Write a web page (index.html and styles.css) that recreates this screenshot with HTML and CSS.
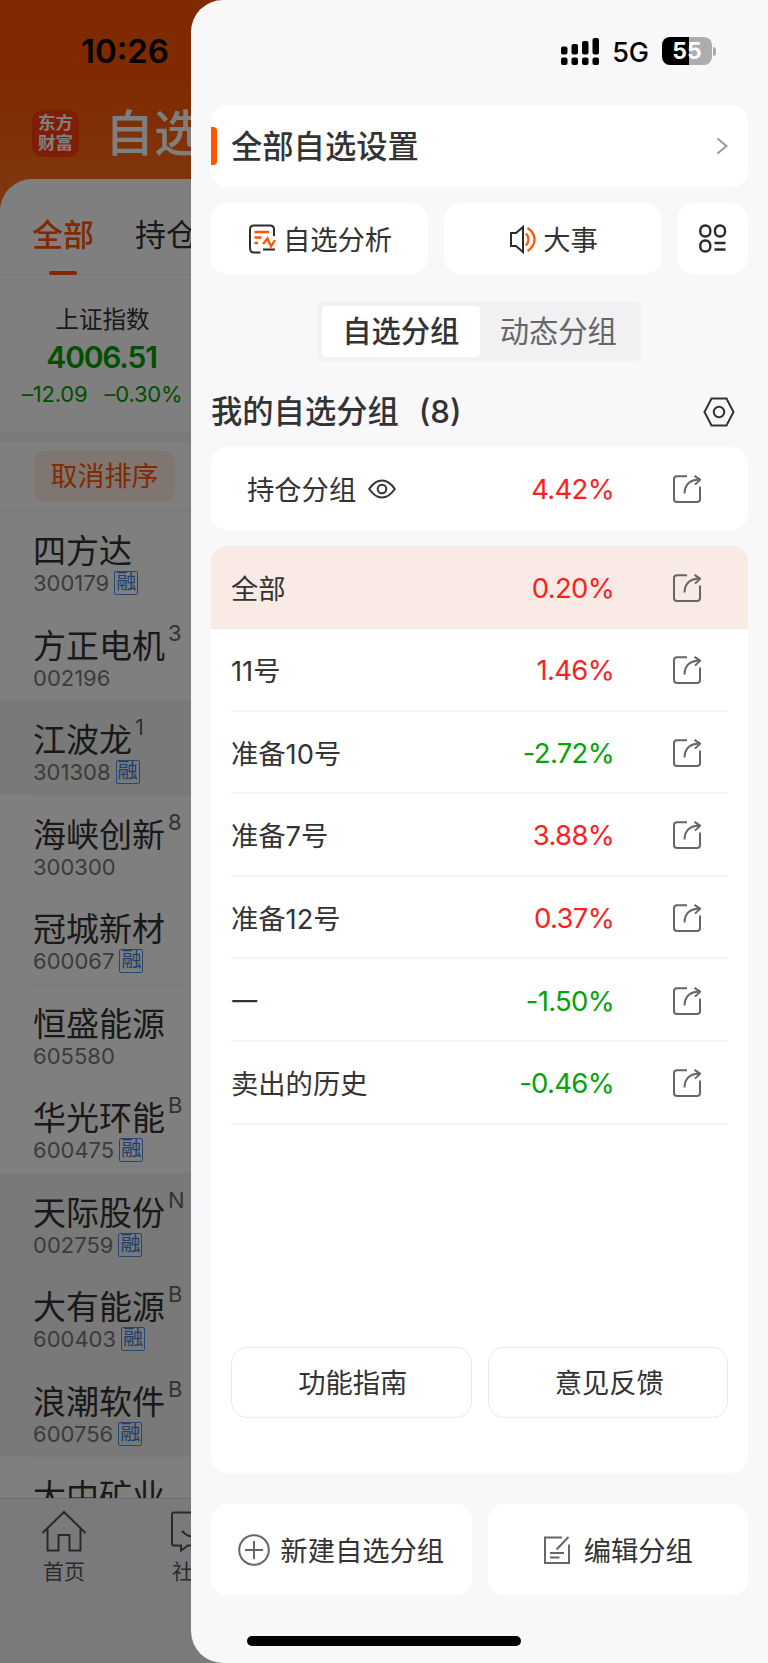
FILE: index.html
```html
<!DOCTYPE html>
<html lang="zh-CN">

<head>
  <meta charset="UTF-8">
  <meta name="viewport" content="width=device-width, initial-scale=1.0">
  <title>自选分组</title>
  <link rel="stylesheet" href="styles.css">
</head>

<body>

  <svg class="sprite">
    <symbol id="share" viewBox="0 0 28 28">
      <path d="M14 1.2H4Q1 1.2 1 4.2V24Q1 27 4 27H24Q27 27 27 24V11.5" />
      <path d="M11.5 18.5C11.7 9.5 17 4.8 27 4.6M21.5 .8L27.2 4.6L22 9.6" />
    </symbol>
  </svg>

  <!-- 底层自选页面 -->
  <div class="page">
    <div class="header">
      <div class="logo">东方<br>财富</div>
      <div class="title">自选</div>
    </div>
    <div class="sheet">
      <div class="tabs">
        <span class="tab active">全部</span>
        <span class="tab">持仓</span>
      </div>
      <div class="index">
        <div class="index-name">上证指数</div>
        <div class="index-value">4006.51</div>
        <div class="index-change"><span>–12.09</span><span>–0.30%</span></div>
      </div>
      <div class="sort"><span class="sort-btn">取消排序</span></div>
      <div class="stocks">
        <div class="stock"><div class="name">四方达</div><div class="code">300179<i>融</i></div></div>
        <div class="stock"><div class="name">方正电机<sup>3</sup></div><div class="code">002196</div></div>
        <div class="stock gray"><div class="name">江波龙<sup>1</sup></div><div class="code">301308<i>融</i></div></div>
        <div class="stock"><div class="name">海峡创新<sup>8</sup></div><div class="code">300300</div></div>
        <div class="stock"><div class="name">冠城新材</div><div class="code">600067<i>融</i></div></div>
        <div class="stock"><div class="name">恒盛能源</div><div class="code">605580</div></div>
        <div class="stock"><div class="name">华光环能<sup>B</sup></div><div class="code">600475<i>融</i></div></div>
        <div class="stock gray"><div class="name">天际股份<sup>N</sup></div><div class="code">002759<i>融</i></div></div>
        <div class="stock gray"><div class="name">大有能源<sup>B</sup></div><div class="code">600403<i>融</i></div></div>
        <div class="stock gray"><div class="name">浪潮软件<sup>B</sup></div><div class="code">600756<i>融</i></div></div>
        <div class="stock"><div class="name">大中矿业</div></div>
      </div>
    </div>
    <div class="tabbar">
      <div class="tabbar-item">
        <svg width="46" height="42" viewBox="0 0 46 42">
          <path d="M1.5 23L23 2L44.500 23M6.500 18.500V40.500H17.500V25H28.500V40.500H39.500V18.500" />
        </svg>
        <span>首页</span>
      </div>
      <div class="tabbar-item">
        <svg width="46" height="42" viewBox="0 0 46 42">
          <path d="M4 2.500H42Q44 2.500 44 4.500V35.500H18L11 40.500V35.500H4Q2 35.500 2 33.500V4.500Q2 2.500 4 2.500ZM12 21Q22 32 33 21" />
        </svg>
        <span>社区</span>
      </div>
    </div>
  </div>

  <div class="mask"></div>
  <div class="time">10:26</div>

  <!-- 右侧抽屉 -->
  <div class="drawer">
    <div class="status">
      <svg width="40" height="30" viewBox="0 0 40 30">
        <rect x="1" y="9.500" width="6.500" height="8" rx="2" />
        <rect x="11.500" y="7" width="6.500" height="10.500" rx="2" />
        <rect x="22" y="4" width="6.500" height="13.500" rx="2" />
        <rect x="32.500" y="1" width="6.500" height="16.500" rx="2" />
        <rect x="1" y="20.500" width="6.500" height="7.500" rx="2" />
        <rect x="11.500" y="20.500" width="6.500" height="7.500" rx="2" />
        <rect x="22" y="20.500" width="6.500" height="7.500" rx="2" />
        <rect x="32.500" y="20.500" width="6.500" height="7.500" rx="2" />
      </svg>
      <span class="net">5G</span>
      <div class="battery">55</div>
      <div class="battery-cap"></div>
    </div>

    <div class="card setting">
      <span>全部自选设置</span>
      <svg width="12" height="18" viewBox="0 0 12 18"><path d="M1.500 1.500L10.500 9L1.500 16.500" /></svg>
    </div>

    <div class="tools">
      <div class="card tool">
        <svg width="29" height="30" viewBox="0 0 29 30">
          <path class="dark" d="M27 12V5.500Q27 1.500 23 1.500H7Q3 1.500 3 5.500V24Q3 28.500 7 28.500H13.500M16 25.500H28" />
          <path class="orange" d="M7.500 8H22M7.500 13.500H14.500M7.500 19H11M16 20L20.500 14.500L24 22.500L28 16" />
        </svg>
        <span>自选分析</span>
      </div>
      <div class="card tool">
        <svg width="29" height="30" viewBox="0 0 29 30">
          <path class="dark" d="M4 9H9L16 3V28L9 22H4Z" />
          <path class="orange" d="M19 9.500Q24 15.500 19 21.500M20.500 4Q27.500 8.500 27.500 15.500T20.500 27" />
        </svg>
        <span>大事</span>
      </div>
      <div class="card tool grid-tool">
        <svg width="30" height="30" viewBox="0 0 30 30">
          <rect class="dark" x="2.300" y="1.500" width="10" height="11" rx="4.800" />
          <rect class="dark" x="17" y="1.500" width="10" height="11" rx="4.800" />
          <rect class="dark" x="2.300" y="16.500" width="10" height="11" rx="4.800" />
          <path class="dark" d="M16.500 19H27.500M16.500 25.500H27.500" />
        </svg>
      </div>
    </div>

    <div class="switch">
      <span class="on">自选分组</span>
      <span>动态分组</span>
    </div>

    <div class="group-title">
      <span>我的自选分组<b>(8)</b></span>
      <svg width="32" height="30" viewBox="0 0 32 30">
        <path d="M8.500 1.500H23.500L30.500 15L23.500 28.500H8.500L1.500 15Z" />
        <circle cx="16" cy="15" r="5.200" />
      </svg>
    </div>

    <div class="card row hold">
      <span class="row-name"><em>持仓分组</em>
        <svg width="28" height="20" viewBox="0 0 28 20">
          <path d="M1.200 10Q7 1.500 14 1.500T26.800 10Q21 18.500 14 18.500T1.200 10Z" />
          <circle cx="14" cy="10" r="4.300" />
        </svg>
      </span>
      <span class="rate up">4.42%</span>
      <svg class="share"><use href="#share" /></svg>
    </div>

    <div class="card groups">
      <div class="row current"><span class="row-name"><em>全部</em></span><span class="rate up">0.20%</span><svg class="share"><use href="#share" /></svg></div>
      <div class="row"><span class="row-name"><em>11号</em></span><span class="rate up">1.46%</span><svg class="share"><use href="#share" /></svg></div>
      <div class="row"><span class="row-name"><em>准备10号</em></span><span class="rate down">-2.72%</span><svg class="share"><use href="#share" /></svg></div>
      <div class="row"><span class="row-name"><em>准备7号</em></span><span class="rate up">3.88%</span><svg class="share"><use href="#share" /></svg></div>
      <div class="row"><span class="row-name"><em>准备12号</em></span><span class="rate up">0.37%</span><svg class="share"><use href="#share" /></svg></div>
      <div class="row"><span class="row-name"><em>一</em></span><span class="rate down">-1.50%</span><svg class="share"><use href="#share" /></svg></div>
      <div class="row"><span class="row-name"><em>卖出的历史</em></span><span class="rate down">-0.46%</span><svg class="share"><use href="#share" /></svg></div>
      <div class="links">
        <div class="link">功能指南</div>
        <div class="link">意见反馈</div>
      </div>
    </div>

    <div class="actions">
      <div class="card action">
        <svg width="32" height="32" viewBox="0 0 32 32">
          <circle cx="16" cy="16" r="14.800" />
          <path d="M16 7V25M7 16H25" />
        </svg>
        <span>新建自选分组</span>
      </div>
      <div class="card action edit">
        <svg width="28" height="30" viewBox="0 0 28 30">
          <path d="M19 2.500H2V28H26V9.500M25.500 2L13.500 14.500M7 18H21M7 22.500H16.500" />
        </svg>
        <span>编辑分组</span>
      </div>
    </div>

    <div class="home-bar"></div>
  </div>

</body>

</html>
```
FILE: styles.css
```css
* {
  padding: 0;
  margin: 0;
  box-sizing: border-box;
}

body {
  width: 768px;
  height: 1663px;
  position: relative;
  overflow: hidden;
  font-family: Inter, "Noto Sans CJK SC", sans-serif;
  color: #333;
}

svg {
  display: block;
  flex-shrink: 0;
  fill: none;
  stroke: #333;
  stroke-width: 2;
}

.sprite {
  display: none;
}

/* 底层页面 */
.page {
  height: 1663px;
  display: flex;
  flex-direction: column;
  background: linear-gradient(#ff5500 0, #ff5500 75px, #ff721f 210px);
}

.header {
  height: 179px;
  flex-shrink: 0;
  padding: 88px 0 0 32px;
  display: flex;
  align-items: center;
  color: #fff;
}

.logo {
  width: 47px;
  height: 47px;
  border-radius: 10px;
  background-color: #ff3c08;
  font-size: 17.5px;
  line-height: 20px;
  font-weight: bold;
  text-align: center;
  padding-top: 3px;
}

.title {
  margin-left: 26px;
  font-size: 49px;
  line-height: 60px;
  font-weight: 500;
}

.sheet {
  flex: 1;
  min-height: 0;
  overflow: hidden;
  background-color: #fff;
  border-radius: 32px 0 0 0;
}

.tabs {
  height: 96px;
  padding-left: 32px;
  display: flex;
  gap: 41px;
  font-size: 31px;
  line-height: 111px;
  border-bottom: 1px solid #eee;
}

.tab.active {
  color: #ff5500;
  font-weight: 500;
  position: relative;
}

.tab.active::after {
  content: '';
  position: absolute;
  left: 17px;
  top: 92px;
  width: 28px;
  height: 4px;
  border-radius: 2px;
  background-color: #ff5500;
}

.index {
  height: 167px;
  padding: 28px 0 0 22px;
  border-bottom: 10px solid #f4f5f9;
  color: #00a000;
}

.index-name {
  width: 161px;
  font-size: 23.5px;
  line-height: 34px;
  text-align: center;
  color: #333;
}

.index-value {
  width: 159px;
  font-size: 30px;
  line-height: 40px;
  font-weight: 600;
  letter-spacing: -1.2px;
  text-align: center;
}

.index-change {
  display: flex;
  gap: 17px;
  font-size: 22px;
  line-height: 35px;
  letter-spacing: -0.2px;
}

.sort {
  height: 69px;
  padding: 9px 0 0 34px;
  border-bottom: 1px solid #eaeaea;
}

.sort-btn {
  display: block;
  width: 141px;
  height: 51px;
  line-height: 52px;
  text-align: center;
  font-size: 27px;
  color: #ff5500;
  background-color: #ffebe3;
  border-radius: 9px;
}

.stock {
  height: 94.500px;
  padding: 17px 0 0 33px;
}

.stock + .stock {
  background: linear-gradient(#f2f2f2, #f2f2f2) 32px 0 / 100% 1px no-repeat;
}

.stock + .stock.gray {
  background: #f2f2f2;
}

.name {
  display: flex;
  font-size: 33px;
  line-height: 47px;
}

.name sup {
  font-size: 22px;
  line-height: 20px;
  margin-left: 3px;
  color: #666;
}

.code {
  display: flex;
  align-items: center;
  font-size: 22px;
  line-height: 16px;
  color: #777;
}

.code i {
  width: 24px;
  height: 24px;
  margin: -4px 0 -4px 5px;
  border: 1px solid #4a8fe8;
  border-radius: 2px;
  font-style: normal;
  font-size: 20px;
  line-height: 21px;
  text-align: center;
  color: #3a7fd8;
}

.tabbar {
  height: 165px;
  flex-shrink: 0;
  padding: 11px 0 0 41px;
  display: flex;
  gap: 83px;
  background-color: #f5f5fa;
  border-top: 1px solid #ddd;
}

.tabbar-item {
  width: 46px;
  display: flex;
  flex-direction: column;
  align-items: center;
  font-size: 21px;
  line-height: 39px;
  color: #555;
  white-space: nowrap;
}

.tabbar-item svg {
  stroke: #555;
}

.mask {
  position: absolute;
  inset: 0;
  background-color: rgba(0, 0, 0, 0.5);
}

.time {
  position: absolute;
  left: 81px;
  top: 30px;
  font-size: 33px;
  line-height: 42px;
  font-weight: 600;
  color: #000;
}

/* 抽屉 */
.drawer {
  position: absolute;
  top: 0;
  right: 0;
  width: 577px;
  height: 1663px;
  padding: 0 20px;
  background-color: #f8f8fb;
  border-radius: 32px 0 0 32px;
}

.card {
  background-color: #fff;
  border-radius: 16px;
}

.status {
  height: 105px;
  padding: 37px 32px 0 0;
  display: flex;
  align-items: flex-start;
  justify-content: flex-end;
}

.status svg {
  fill: #000;
  stroke: none;
}

.net {
  margin: 0 13px 0 12px;
  font-size: 27px;
  line-height: 31px;
  font-weight: 500;
  color: #000;
}

.battery {
  width: 50px;
  height: 28px;
  border-radius: 8px;
  background: linear-gradient(90deg, #000 55%, #adadaf 55%);
  color: #fff;
  font-size: 23px;
  line-height: 28px;
  font-weight: bold;
  text-align: center;
}

.battery-cap {
  width: 3px;
  height: 9px;
  margin: 10px 0 0 1px;
  border-radius: 0 3px 3px 0;
  background-color: #adadaf;
}

.setting {
  height: 82px;
  display: flex;
  align-items: center;
  padding-right: 20px;
  font-size: 31.300px;
  font-weight: 500;
}

.setting::before {
  content: '';
  width: 6px;
  height: 38px;
  margin-right: 14px;
  border-radius: 0 4px 4px 0;
  background-color: #ff5500;
}

.setting span {
  flex: 1;
  padding-bottom: 4px;
}

.setting svg {
  stroke: #999;
}

.tools {
  margin-top: 16px;
  height: 71px;
  display: grid;
  grid-template-columns: 217px 217px 71px;
  gap: 16px;
}

.tool {
  display: flex;
  align-items: center;
  justify-content: center;
  gap: 7px;
  font-size: 27.300px;
}

.tool span {
  padding-bottom: 2px;
}

.dark {
  stroke: #2b2b2b;
}

.orange {
  stroke: #ff5500;
  stroke-width: 2.300;
}

.grid-tool svg {
  stroke-width: 2.400;
}

.switch {
  width: 323px;
  height: 59px;
  margin: 28px 0 0 107px;
  padding: 4px;
  display: flex;
  border-radius: 3px;
  background-color: #f1f1f3;
  font-size: 29.300px;
  line-height: 52px;
  text-align: center;
  color: #666;
}

.switch span {
  width: 157.500px;
}

.switch .on {
  height: 51px;
  border-radius: 4px;
  background-color: #fff;
  color: #333;
  font-weight: 500;
}

.group-title {
  height: 86px;
  padding: 15px 13px 0 0;
  display: flex;
  align-items: center;
  justify-content: space-between;
  font-size: 31.300px;
  font-weight: 500;
}

.group-title span {
  padding-bottom: 4px;
}

.group-title b {
  margin-left: 20px;
  font-weight: 500;
}

.row {
  height: 82.600px;
  padding: 0 47px 0 20px;
  display: flex;
  align-items: center;
  font-size: 27.300px;
  background: linear-gradient(#f4f4f5, #f4f4f5) 20px 100% / 497px 2px no-repeat;
}

.row.hold {
  height: 83px;
  padding-left: 36px;
  background: #fff;
}

.row.current {
  height: 83px;
  background: #f9eae5;
}

.row-name {
  flex: 1;
  display: flex;
  align-items: center;
  gap: 12px;
}

.row-name em {
  font-style: normal;
  padding-bottom: 2px;
}

.rate {
  font-size: 27.500px;
  letter-spacing: -0.7px;
}

.up {
  color: #fc2121;
}

.down {
  color: #06a206;
}

.share {
  width: 28px;
  height: 28px;
  margin-left: 59px;
  stroke: #666;
}

.groups {
  height: 927px;
  margin-top: 16px;
  overflow: hidden;
}

.links {
  margin: 222px 20px 0;
  display: flex;
  gap: 16px;
}

.link {
  flex: 1;
  height: 71px;
  line-height: 71px;
  border: 1px solid #e9e9e9;
  border-radius: 16px;
  text-align: center;
  font-size: 27.300px;
  padding-left: 3px;
}

.actions {
  height: 91px;
  margin-top: 31px;
  display: flex;
  gap: 16px;
}

.action {
  flex: 1;
  display: flex;
  align-items: center;
  justify-content: center;
  gap: 10px;
  font-size: 27.300px;
}

.action svg {
  stroke: #666;
}

.action span {
  padding-bottom: 1px;
}

.edit {
  gap: 13px;
}

.home-bar {
  width: 274px;
  height: 10px;
  margin: 41px 0 0 36px;
  border-radius: 5px;
  background-color: #000;
}
```
